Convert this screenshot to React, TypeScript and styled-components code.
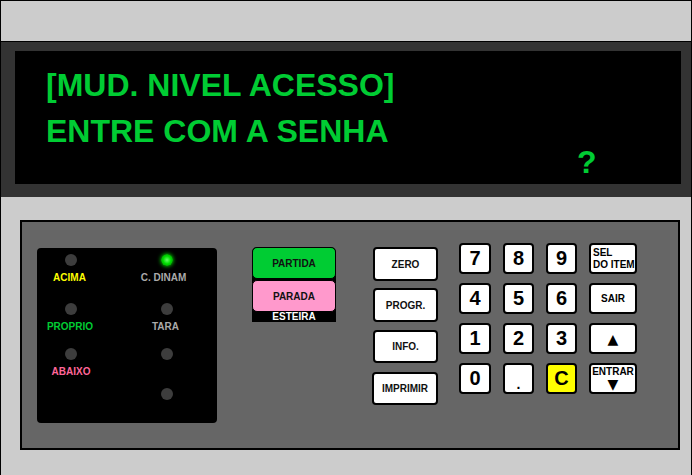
import React from "react";
import styled, { createGlobalStyle } from "styled-components";

const Global = createGlobalStyle`
  html, body { margin: 0; padding: 0; background: #ccc; }
  body { font-family: "Liberation Sans", Arial, sans-serif; }
`;

const Frame = styled.div`
  width: 692px;
  height: 475px;
  box-sizing: border-box;
  border: 1px solid #000;
  border-bottom: none;
  background: #ccc;
  overflow: hidden;
`;

const TopStrip = styled.div`
  height: 40px;
`;

const Band = styled.div`
  border-top: 1px solid #000;
  background: #333;
  padding: 9px 10px 13px 14px;
`;

const Display = styled.div`
  height: 133px;
  box-sizing: border-box;
  background: #000;
  padding: 20px 0 0 31px;
  color: #00cc33;
  font-weight: bold;
  font-size: 32px;
  line-height: 28px;
  white-space: pre;
`;

const DisplayLine = styled.div<{ $mt?: number; $pl?: number }>`
  height: 28px;
  margin-top: ${(p) => p.$mt ?? 0}px;
  padding-left: ${(p) => p.$pl ?? 0}px;
`;

const Lower = styled.div`
  padding: 23px 0 0 19px;
`;

const Panel = styled.div`
  width: 660px;
  height: 230px;
  box-sizing: border-box;
  border: 2px solid #000;
  background: #666;
  display: flex;
  align-items: flex-start;
`;

const LedBox = styled.div`
  margin: 26px 0 0 15px;
  width: 180px;
  height: 175px;
  box-sizing: border-box;
  background: #000;
  border-radius: 4px;
  padding-top: 6px;
  display: grid;
  grid-template-columns: 68px 68px;
  column-gap: 28px;
  grid-template-rows: 49px 45px 40px 12px;
`;

const LedCell = styled.div<{ $col: number; $row: number }>`
  grid-column: ${(p) => p.$col};
  grid-row: ${(p) => p.$row};
  display: flex;
  flex-direction: column;
  align-items: center;
`;

const Led = styled.div<{ $on?: boolean }>`
  width: 12px;
  height: 12px;
  border-radius: 50%;
  background: ${(p) =>
    p.$on
      ? "radial-gradient(circle at 50% 50%, #66ff66 0%, #00dd00 45%, #007700 100%)"
      : "#3d3d3d"};
  box-shadow: ${(p) => (p.$on ? "0 0 4px #00ff00" : "none")};
`;

const LedLabel = styled.div<{ $color: string; $dx?: number }>`
  margin-top: 6px;
  margin-left: ${(p) => p.$dx ?? 0}px;
  font-size: 10px;
  line-height: 12px;
  font-weight: bold;
  color: ${(p) => p.$color};
  white-space: nowrap;
`;

const Esteira = styled.div`
  margin: 25px 0 0 35px;
  width: 84px;
  height: 75px;
  background: #000;
  border-radius: 5px 5px 0 0;
  display: flex;
  flex-direction: column;
`;

const BeltButton = styled.div<{ $bg: string }>`
  height: 32px;
  box-sizing: border-box;
  border: 1px solid #000;
  border-radius: 5px;
  background: ${(p) => p.$bg};
  display: flex;
  align-items: center;
  justify-content: center;
  font-size: 10px;
  font-weight: bold;
  color: #111;
  & + & {
    margin-top: 1px;
  }
`;

const BeltLabel = styled.div`
  height: 10px;
  line-height: 10px;
  text-align: center;
  color: #fff;
  font-size: 10px;
  font-weight: bold;
`;

const FuncCol = styled.div`
  margin: 25px 0 0 35px;
  width: 67px;
  display: flex;
  flex-direction: column;
  align-items: flex-end;
`;

const Key = styled.div<{ $w?: number; $h?: number; $mt?: number; $bg?: string }>`
  width: ${(p) => p.$w ?? 65}px;
  height: ${(p) => p.$h ?? 34}px;
  margin-top: ${(p) => p.$mt ?? 0}px;
  box-sizing: border-box;
  border: 2px solid #000;
  border-radius: 4px;
  background: ${(p) => p.$bg ?? "#fff"};
  display: flex;
  align-items: center;
  justify-content: center;
  font-size: 10px;
  font-weight: bold;
  color: #111;
`;

const Keypad = styled.div`
  margin: 21px 0 0 21px;
  display: grid;
  grid-template-columns: 32px 31px 31px 48px;
  grid-auto-rows: 31px;
  column-gap: 12px;
  row-gap: 9px;
`;

const PadKey = styled.div<{ $bg?: string }>`
  box-sizing: border-box;
  border: 2px solid #000;
  border-radius: 4px;
  background: ${(p) => p.$bg ?? "#fff"};
  display: flex;
  align-items: center;
  justify-content: center;
  font-size: 20px;
  font-weight: bold;
  color: #000;
`;

const DotKey = styled(PadKey)`
  align-items: flex-end;
  padding-bottom: 3px;
  font-size: 14px;
  line-height: 10px;
`;

const SideKey = styled.div`
  box-sizing: border-box;
  border: 2px solid #000;
  border-radius: 4px;
  background: #fff;
  display: flex;
  flex-direction: column;
  align-items: center;
  justify-content: center;
  font-size: 10px;
  font-weight: bold;
  color: #000;
  line-height: 12px;
`;

const SelKey = styled(SideKey)`
  align-items: flex-start;
  justify-content: center;
  padding-left: 2px;
`;

const ArrowGlyph = styled.span<{ $size: number }>`
  font-size: ${(p) => p.$size}px;
  line-height: ${(p) => p.$size}px;
  font-family: "DejaVu Sans", sans-serif;
`;

const EnterKey = styled(SideKey)`
  justify-content: flex-start;
  padding-top: 1px;
  line-height: 11px;
`;

export default function App() {
  return (
    <>
      <Global />
      <Frame>
        <TopStrip />
        <Band>
          <Display>
            <DisplayLine>[MUD. NIVEL ACESSO]</DisplayLine>
            <DisplayLine $mt={18}>ENTRE COM A SENHA</DisplayLine>
            <DisplayLine $mt={3} $pl={531}>?</DisplayLine>
          </Display>
        </Band>
        <Lower>
          <Panel>
            <LedBox>
              <LedCell $col={1} $row={1}>
                <Led />
                <LedLabel $color="#ffff00" $dx={-3}>ACIMA</LedLabel>
              </LedCell>
              <LedCell $col={2} $row={1}>
                <Led $on />
                <LedLabel $color="#aaaaaa" $dx={-7}>C. DINAM</LedLabel>
              </LedCell>
              <LedCell $col={1} $row={2}>
                <Led />
                <LedLabel $color="#00cc33" $dx={-2}>PROPRIO</LedLabel>
              </LedCell>
              <LedCell $col={2} $row={2}>
                <Led />
                <LedLabel $color="#aaaaaa" $dx={-3}>TARA</LedLabel>
              </LedCell>
              <LedCell $col={1} $row={3}>
                <Led />
                <LedLabel $color="#ff6699">ABAIXO</LedLabel>
              </LedCell>
              <LedCell $col={2} $row={3}>
                <Led />
              </LedCell>
              <LedCell $col={2} $row={4}>
                <Led />
              </LedCell>
            </LedBox>

            <Esteira>
              <BeltButton $bg="#00cc33">PARTIDA</BeltButton>
              <BeltButton $bg="#ff99cc">PARADA</BeltButton>
              <BeltLabel>ESTEIRA</BeltLabel>
            </Esteira>

            <FuncCol>
              <Key>ZERO</Key>
              <Key $mt={7}>PROGR.</Key>
              <Key $mt={8} $h={33}>INFO.</Key>
              <Key $mt={9} $w={66} $h={33}>IMPRIMIR</Key>
            </FuncCol>

            <Keypad>
              <PadKey>7</PadKey>
              <PadKey>8</PadKey>
              <PadKey>9</PadKey>
              <SelKey>
                <span>SEL</span>
                <span>DO ITEM</span>
              </SelKey>
              <PadKey>4</PadKey>
              <PadKey>5</PadKey>
              <PadKey>6</PadKey>
              <SideKey>SAIR</SideKey>
              <PadKey>1</PadKey>
              <PadKey>2</PadKey>
              <PadKey>3</PadKey>
              <SideKey>
                <ArrowGlyph $size={14}>▲</ArrowGlyph>
              </SideKey>
              <PadKey>0</PadKey>
              <DotKey>.</DotKey>
              <PadKey $bg="#ffff00">C</PadKey>
              <EnterKey>
                <span>ENTRAR</span>
                <ArrowGlyph $size={14}>▼</ArrowGlyph>
              </EnterKey>
            </Keypad>
          </Panel>
        </Lower>
      </Frame>
    </>
  );
}
